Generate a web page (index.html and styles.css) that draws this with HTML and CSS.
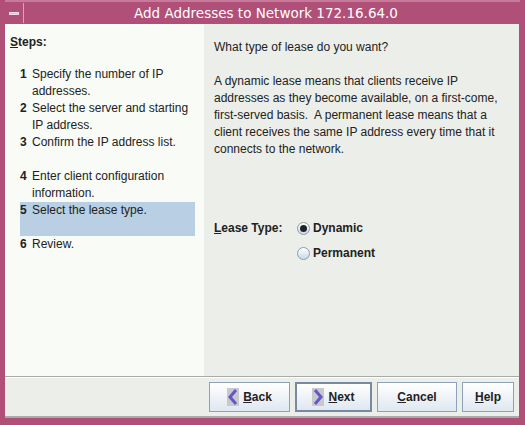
FILE: index.html
```html
<!DOCTYPE html>
<html lang="en">
<head>
    <meta charset="UTF-8">
    <title>Add Addresses to Network 172.16.64.0</title>
    <link rel="stylesheet" href="styles.css">
</head>
<body>
    <div class="window">
        <div class="titlebar">
            <div class="menu-btn"><span></span></div>
            <div class="title">Add Addresses to Network 172.16.64.0</div>
        </div>

        <div class="content">
            <aside class="steps">
                <h3 class="steps-title"><u>S</u>teps:</h3>
                <ol class="step-list">
                    <li><b>1</b><span>Specify the number of IP addresses.</span></li>
                    <li><b>2</b><span>Select the server and starting IP address.</span></li>
                    <li><b>3</b><span>Confirm the IP address list.</span></li>
                    <li><b>4</b><span>Enter client configuration information.</span></li>
                    <li class="current"><b>5</b><span>Select the lease type.</span></li>
                    <li><b>6</b><span>Review.</span></li>
                </ol>
            </aside>

            <main class="panel">
                <p>What type of lease do you want?</p>
                <p>A dynamic lease means that clients receive IP addresses as they become available, on a first-come, first-served basis.&nbsp; A permanent lease means that a client receives the same IP address every time that it connects to the network.</p>

                <div class="lease">
                    <span class="lease-label"><u>L</u>ease Type:</span>
                    <div class="radios">
                        <label class="radio"><span class="dot checked"></span>Dynamic</label>
                        <label class="radio"><span class="dot"></span>Permanent</label>
                    </div>
                </div>
            </main>
        </div>

        <div class="buttonbar">
            <button class="btn btn-back">
                <svg width="12" height="18" viewBox="0 0 12 18"><polyline points="9,2 3,9 9,16" fill="none" stroke="#6657c8" stroke-width="3"/></svg>
                <span><u>B</u>ack</span>
            </button>
            <button class="btn btn-next default">
                <svg width="12" height="18" viewBox="0 0 12 18"><polyline points="3,2 9,9 3,16" fill="none" stroke="#6657c8" stroke-width="3"/></svg>
                <span><u>N</u>ext</span>
            </button>
            <button class="btn btn-cancel"><span><u>C</u>ancel</span></button>
            <button class="btn btn-help"><span><u>H</u>elp</span></button>
        </div>
    </div>
</body>
</html>
```

FILE: styles.css
```css
* {
    margin: 0;
    padding: 0;
    box-sizing: border-box;
}

body {
    font-family: 'Liberation Sans', Arial, sans-serif;
    font-size: 12px;
    color: #222;
    background: #b04f78;
}

.window {
    width: 525px;
    height: 425px;
    background: #b04f78;
    padding: 0 6px 7px 5px;
    display: flex;
    flex-direction: column;
}

.titlebar {
    height: 24px;
    display: flex;
    align-items: center;
    border-top: 2px solid #c77a9a;
    margin: 0 -1px 0 0;
}

.menu-btn {
    width: 19px;
    height: 20px;
    border-right: 1px solid #d9a3b9;
    display: flex;
    align-items: center;
    justify-content: center;
}

.menu-btn span {
    width: 10px;
    height: 3px;
    background: #e6c5d3;
    border: 1px solid #f0dbe4;
}

.title {
    flex: 1;
    text-align: center;
    color: #fff;
    font-family: 'DejaVu Sans', sans-serif;
    font-size: 13.5px;
    padding-right: 12px;
}

.content {
    flex: 1;
    display: flex;
}

.steps {
    width: 199px;
    background: #f8fbf6;
    padding: 11px 0 0 5px;
}

.steps-title {
    font-size: 12px;
    font-weight: bold;
    line-height: 14px;
    margin-bottom: 17px;
}

.step-list {
    list-style: none;
    margin-left: 10px;
    width: 175px;
}

.step-list li {
    display: flex;
    min-height: 34px;
    line-height: 17px;
}

.step-list li b {
    width: 12px;
    flex-shrink: 0;
}

.step-list li span {
    padding-right: 4px;
}

.step-list li.current {
    background: #b8cfe4;
}

.panel {
    flex: 1;
    background: #eceee9;
    padding: 15px 10px 0 10px;
    line-height: 17px;
}

.panel p {
    margin-bottom: 17px;
}

.lease {
    display: flex;
    margin-top: 62px;
}

.lease-label {
    font-weight: bold;
    width: 83px;
    line-height: 17px;
}

.radios {
    display: flex;
    flex-direction: column;
    gap: 8px;
}

.radio {
    display: flex;
    align-items: center;
    gap: 3px;
    font-weight: bold;
}

.dot {
    width: 13px;
    height: 13px;
    border-radius: 50%;
    border: 1px solid #8c9cab;
    background: linear-gradient(#ffffff, #c9d8e8);
    display: flex;
    align-items: center;
    justify-content: center;
}

.dot.checked::after {
    content: '';
    width: 7px;
    height: 7px;
    border-radius: 50%;
    background: #222;
}

.buttonbar {
    height: 42px;
    background: #eceee9;
    border-top: 1px solid #a9aba7;
    border-bottom: 2px solid #a9aba7;
    box-shadow: inset 0 1px 0 #fff;
    display: flex;
    justify-content: flex-end;
    align-items: center;
    gap: 5px;
    padding-right: 5px;
    padding-top: 1px;
}

.btn {
    height: 30px;
    font-family: 'Liberation Sans', Arial, sans-serif;
    font-size: 12px;
    font-weight: bold;
    color: #222;
    background: linear-gradient(#ffffff, #dfe7f0);
    border: 1px solid #8fa1b8;
    display: flex;
    align-items: center;
    justify-content: center;
    gap: 4px;
}

.btn svg {
    background: #c7c9cc;
}

.btn.default {
    border: 2px solid #7889a4;
}

.btn-back {
    width: 81px;
}

.btn-next {
    width: 77px;
}

.btn-cancel {
    width: 80px;
}

.btn-help {
    width: 52px;
}
```
